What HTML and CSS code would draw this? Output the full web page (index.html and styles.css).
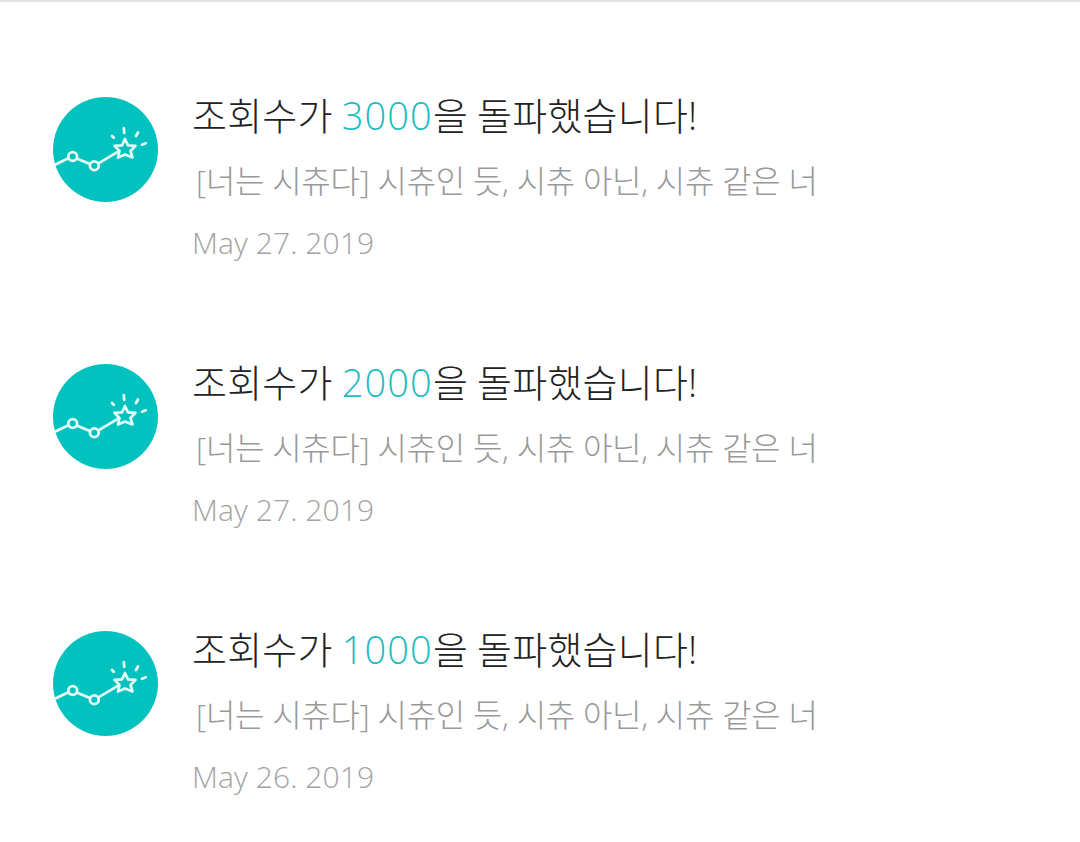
FILE: index.html
```html
<!DOCTYPE html>
<html lang="ko">
<head>
<meta charset="utf-8">
<title>알림</title>
<link rel="stylesheet" href="styles.css">
</head>
<body>
<main class="list">
  <article class="item">
    <svg class="icon" viewBox="0 0 105 105" aria-hidden="true"><use href="#badge"/></svg>
    <div class="body">
      <h2 class="title">조회수가 <span class="num">3000</span>을 돌파했습니다!</h2>
      <p class="sub">[너는 시츄다] 시츄인 듯, 시츄 아닌, 시츄 같은 너</p>
      <p class="date">May 27. 2019</p>
    </div>
  </article>
  <article class="item">
    <svg class="icon" viewBox="0 0 105 105" aria-hidden="true"><use href="#badge"/></svg>
    <div class="body">
      <h2 class="title">조회수가 <span class="num">2000</span>을 돌파했습니다!</h2>
      <p class="sub">[너는 시츄다] 시츄인 듯, 시츄 아닌, 시츄 같은 너</p>
      <p class="date">May 27. 2019</p>
    </div>
  </article>
  <article class="item">
    <svg class="icon" viewBox="0 0 105 105" aria-hidden="true"><use href="#badge"/></svg>
    <div class="body">
      <h2 class="title">조회수가 <span class="num">1000</span>을 돌파했습니다!</h2>
      <p class="sub">[너는 시츄다] 시츄인 듯, 시츄 아닌, 시츄 같은 너</p>
      <p class="date">May 26. 2019</p>
    </div>
  </article>
</main>
<svg class="defs" width="0" height="0" aria-hidden="true">
  <defs>
    <g id="badge">
      <circle cx="52.5" cy="52.5" r="52.5" fill="#02c2bf"/>
      <g fill="none" stroke="#e4fbf8" stroke-width="2.7" stroke-linecap="round" stroke-linejoin="round">
        <path d="M2 67.800 L15.300 61.200 M24.300 61.800 L36.300 66.800 M46.300 65.800 L64.300 55.200"/>
        <circle cx="19.700" cy="59.500" r="4.400"/>
        <circle cx="41.300" cy="68.800" r="4.400"/>
        <path d="M72 42 L75 48.300 L82.500 48.800 L77.500 54 L79.500 60.500 L72 57.500 L65 60.500 L66.500 54 L61.500 48.800 L69 48.300 Z"/>
        <path d="M59 39 L60.800 40.800 M70.800 31 L71.200 36 M85 35.500 L83 39 M92.800 46.300 L89 47.700"/>
      </g>
    </g>
  </defs>
</svg>
</body>
</html>
```
FILE: styles.css
```css
html, body {
  margin: 0;
  padding: 0;
  background: #fff;
}
body {
  width: 1080px;
  height: 842px;
  overflow: hidden;
  box-sizing: border-box;
  border-top: 2px solid #e2e2e2;
  font-family: "Open Sans", "Noto Sans CJK KR", sans-serif;
  font-weight: 300;
}
.list {
  display: flex;
  flex-direction: column;
  gap: 57px;
  padding: 83px 0 0 53px;
}
.item {
  display: flex;
  gap: 34px;
  height: 210px;
}
.icon {
  flex: none;
  width: 105px;
  height: 105px;
  margin-top: 12px;
}
.defs {
  position: absolute;
}
.body {
  display: flex;
  flex-direction: column;
}
.title {
  margin: 0;
  font-size: 38px;
  line-height: 60px;
  font-weight: 300;
  color: #222;
  letter-spacing: 0.2px;
  word-spacing: -1px;
}
.num {
  color: #1cbcc0;
  letter-spacing: 1.1px;
}
.sub {
  margin: 6px 0 0 4px;
  font-size: 32px;
  line-height: 60px;
  color: #999;
  letter-spacing: -0.3px;
}
.date {
  margin: 2px 0 0;
  font-size: 30px;
  line-height: 60px;
  color: #a3a3a3;
  letter-spacing: 0.1px;
}
```
